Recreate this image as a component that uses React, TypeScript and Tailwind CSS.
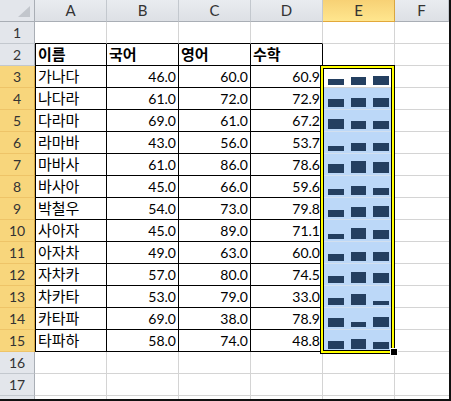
import React from 'react';

type Row = { name: string; kor: number; eng: number; math: number; bars: number[] };

const rows: Row[] = [
  { name: '가나다', kor: 46, eng: 60, math: 60.9, bars: [6, 8, 9] },
  { name: '나다라', kor: 61, eng: 72, math: 72.9, bars: [8, 9, 9] },
  { name: '다라마', kor: 69, eng: 61, math: 67.2, bars: [10, 8, 8] },
  { name: '라마바', kor: 43, eng: 56, math: 53.7, bars: [5, 8, 8] },
  { name: '마바사', kor: 61, eng: 86, math: 78.6, bars: [9, 12, 11] },
  { name: '바사아', kor: 45, eng: 66, math: 59.6, bars: [6, 9, 7] },
  { name: '박철우', kor: 54, eng: 73, math: 79.8, bars: [7, 10, 11] },
  { name: '사아자', kor: 45, eng: 89, math: 71.1, bars: [5, 11, 9] },
  { name: '아자차', kor: 49, eng: 63, math: 60.0, bars: [7, 9, 9] },
  { name: '자차카', kor: 57, eng: 80, math: 74.5, bars: [7, 11, 10] },
  { name: '차카타', kor: 53, eng: 79, math: 33.0, bars: [7, 11, 4] },
  { name: '카타파', kor: 69, eng: 38, math: 78.9, bars: [9, 5, 10] },
  { name: '타파하', kor: 58, eng: 74, math: 48.8, bars: [8, 10, 7] },
];

const heads = ['이름', '국어', '영어', '수학'];
const cols = ['A', 'B', 'C', 'D', 'E', 'F'];

const num = "font-['Lato','Noto_Sans_CJK_KR',sans-serif] text-[14px] leading-[17px]";
const kor = "font-['Noto_Sans_CJK_KR',sans-serif] text-[15px] leading-[20px]";

function RowHeader({ n, selected }: { n?: number; selected: boolean }) {
  return (
    <div
      className={`w-[35px] h-[22px] shrink-0 flex items-center justify-center border-r border-b text-[#333] ${num} ${
        selected
          ? 'bg-[#f8d67c] border-r-[#d9a640] border-b-[#eec468]'
          : 'bg-[#e3e6eb] border-r-[#a9aeb5] border-b-[#c3c8ce]'
      }`}
    >
      {n}
    </div>
  );
}

function Bars({ h }: { h: number[] }) {
  return (
    <div className="flex items-end gap-[7px] pl-[5px] pb-[2px] h-full">
      <div className="w-[16px] bg-[#243f60]" style={{ height: h[0] }} />
      <div className="w-[15px] bg-[#243f60]" style={{ height: h[1] }} />
      <div className="w-[16px] bg-[#243f60]" style={{ height: h[2] }} />
    </div>
  );
}

export default function App() {
  return (
    <div className="relative w-[451px] h-[401px] overflow-hidden bg-white border-r-2 border-b-2 border-[#111]">
      {/* column header */}
      <div className="flex h-[22px]">
        <div className="w-[35px] shrink-0 bg-[#e3e6eb] border-r border-b border-[#a9aeb5]">
          <svg width="34" height="21" viewBox="0 0 34 21">
            <polygon points="18,17 30,17 30,6" fill="#c2c6cc" />
          </svg>
        </div>
        {cols.map((c) =>
          c === 'E' ? (
            <div
              key={c}
              className={`w-[72px] shrink-0 flex items-center justify-center bg-linear-to-b from-[#f7d175] to-[#ffe68e] border-r border-b border-r-[#d9a640] border-b-[#e2a83a] text-[#333] ${num} text-[15px]`}
            >
              {c}
            </div>
          ) : (
            <div
              key={c}
              className={`${c === 'F' ? 'flex-1' : 'w-[72px] shrink-0'} flex items-center justify-center bg-linear-to-b from-[#e9ecf0] to-[#dde0e5] border-r border-b border-r-[#c3c8ce] border-b-[#a9aeb5] text-[#333] ${num} text-[15px]`}
            >
              {c}
            </div>
          )
        )}
      </div>

      {/* row 1 */}
      <div className="flex h-[22px]">
        <RowHeader n={1} selected={false} />
        {[0, 1, 2, 3].map((i) => (
          <div key={i} className="w-[72px] shrink-0 border-r border-b border-r-[#d4d4d4] border-b-black" />
        ))}
        <div className="w-[72px] shrink-0 border-r border-b border-[#d4d4d4]" />
        <div className="flex-1 border-b border-[#d4d4d4]" />
      </div>

      {/* row 2 */}
      <div className="flex h-[22px]">
        <RowHeader n={2} selected={false} />
        {heads.map((t, i) => (
          <div
            key={t}
            className={`w-[72px] shrink-0 flex items-end pl-[2px] pb-[1px] border-r border-b border-black font-bold ${kor} ${
              i === 0 ? 'border-l' : ''
            }`}
          >
            {t}
          </div>
        ))}
        <div className="w-[72px] shrink-0 border-r border-b border-[#d4d4d4]" />
        <div className="flex-1 border-b border-[#d4d4d4]" />
      </div>

      {/* data rows */}
      {rows.map((r, idx) => (
        <div key={r.name} className="flex h-[22px]">
          <RowHeader n={idx + 3} selected />
          <div className={`w-[72px] shrink-0 flex items-end pl-[2px] pb-[1px] border-l border-r border-b border-black ${kor}`}>
            {r.name}
          </div>
          {[r.kor, r.eng, r.math].map((v, i) => (
            <div
              key={i}
              className={`w-[72px] shrink-0 flex items-end justify-end pr-[2px] pb-[2px] border-r border-b border-black ${num}`}
            >
              {v.toFixed(1)}
            </div>
          ))}
          <div
            className={`w-[72px] shrink-0 border-r border-b ${
              idx === 0 ? 'bg-white border-[#d4d4d4]' : 'bg-[#bcd8f8] border-[#d3e0ef]'
            }`}
          >
            <Bars h={r.bars} />
          </div>
          <div className="flex-1 border-b border-[#d4d4d4]" />
        </div>
      ))}

      {/* empty rows */}
      {[16, 17, 0].map((n) => (
        <div key={n} className="flex h-[22px]">
          <RowHeader n={n || undefined} selected={false} />
          {[0, 1, 2, 3, 4].map((i) => (
            <div key={i} className="w-[72px] shrink-0 border-r border-b border-[#d4d4d4]" />
          ))}
          <div className="flex-1 border-b border-[#d4d4d4]" />
        </div>
      ))}

      {/* selection border */}
      <div className="absolute left-[320px] top-[65px] w-[75px] h-[289px] border border-black pointer-events-none">
        <div className="h-full border-2 border-[#ffff00]">
          <div className="h-full border border-black" />
        </div>
      </div>
      <div className="absolute left-[390px] top-[348px] w-[8px] h-[8px] bg-white p-[1px] pointer-events-none">
        <div className="w-full h-full bg-black" />
      </div>
    </div>
  );
}
